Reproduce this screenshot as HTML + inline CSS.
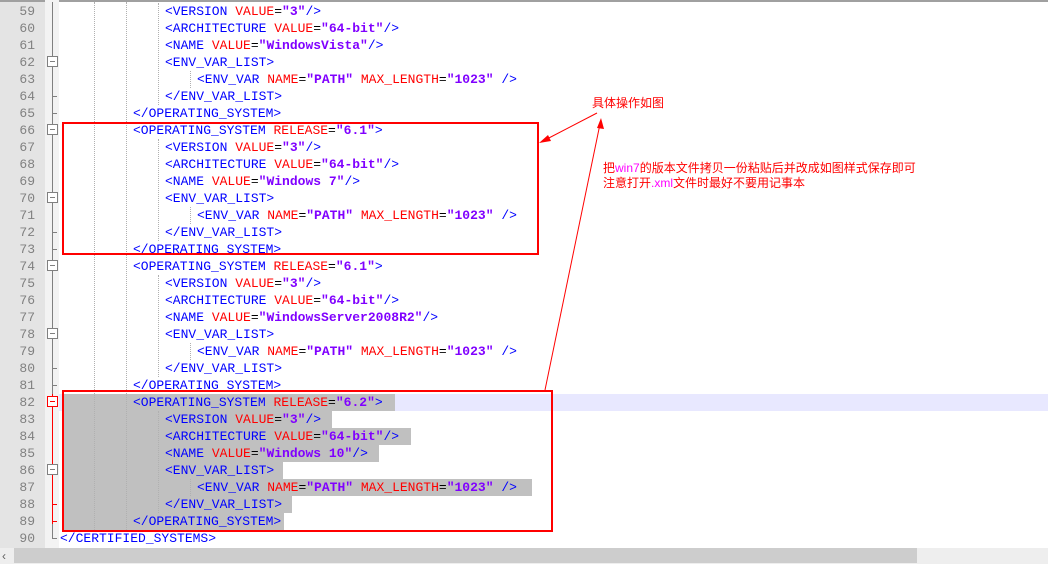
<!DOCTYPE html>
<html><head><meta charset="utf-8"><style>
*{margin:0;padding:0;box-sizing:border-box}
body{width:1048px;height:564px;overflow:hidden;background:#fff;position:relative;font-family:"Liberation Mono",monospace;font-size:13px}
.ln{position:absolute;left:0;width:45px;height:17px;background:#e4e4e4;color:#808080;text-align:right;padding-right:10px;line-height:17px;font-size:13px}
.fm{position:absolute;left:45px;top:0;width:14px;height:548px;background:#f3f3f3}
.fl{position:absolute;left:52px;width:1px;background:#808080}
.fb{position:absolute;left:47px;width:11px;height:11px;border:1px solid #808080;background:#fff}
.fb:after{content:"";position:absolute;left:2px;top:4px;width:5px;height:1px;background:#808080}
.fb.r{border-color:#f00}.fb.r:after{background:#f00}
.tk{position:absolute;left:52px;width:5px;height:1px;background:#808080}
.l{position:absolute;height:17px;line-height:17px;white-space:pre}
.t{color:#0000ff}.a{color:#ff0000}.v{color:#8000ff;font-weight:bold}.e{color:#000}
.sel{position:absolute;left:63px;height:17px;background:#c0c0c0}
.g{position:absolute;width:1px;border-left:1px dotted #b0b0b0}
.box{position:absolute;border:2px solid #f00}
.cn{position:absolute;color:#f00;font-family:"Liberation Sans","Noto Sans CJK SC",sans-serif;font-size:12px;line-height:15px;white-space:nowrap}
</style></head><body>
<div style="position:absolute;left:0;top:0;width:1048px;height:2px;background:#a0a0a0"></div>
<div class="fm"></div>
<div style="position:absolute;left:0;top:2px;width:45px;height:546px;background:#e4e4e4"></div>
<!-- current line highlight -->
<div style="position:absolute;left:59px;top:394px;width:989px;height:17px;background:#e8e8ff"></div>
<!-- selection -->
<div class="sel" style="top:394px;width:332px"></div>
<div class="sel" style="top:411px;width:269px"></div>
<div class="sel" style="top:428px;width:348px"></div>
<div class="sel" style="top:445px;width:316px"></div>
<div class="sel" style="top:462px;width:220px"></div>
<div class="sel" style="top:479px;width:469px"></div>
<div class="sel" style="top:496px;width:229px"></div>
<div class="sel" style="top:513px;width:221px"></div>
<!-- indent guides -->
<div class="g" style="left:94px;top:2px;height:528px"></div>
<div class="g" style="left:126px;top:2px;height:528px"></div>
<div class="g" style="left:158px;top:3px;height:102px"></div>
<div class="g" style="left:158px;top:139px;height:102px"></div>
<div class="g" style="left:158px;top:275px;height:102px"></div>
<div class="g" style="left:158px;top:411px;height:102px"></div>
<div class="g" style="left:190px;top:71px;height:17px"></div>
<div class="g" style="left:190px;top:207px;height:17px"></div>
<div class="g" style="left:190px;top:343px;height:17px"></div>
<div class="g" style="left:190px;top:479px;height:17px"></div>
<!-- line numbers -->
<div class="ln" style="top:3px">59</div><div class="ln" style="top:20px">60</div><div class="ln" style="top:37px">61</div><div class="ln" style="top:54px">62</div><div class="ln" style="top:71px">63</div><div class="ln" style="top:88px">64</div><div class="ln" style="top:105px">65</div><div class="ln" style="top:122px">66</div><div class="ln" style="top:139px">67</div><div class="ln" style="top:156px">68</div><div class="ln" style="top:173px">69</div><div class="ln" style="top:190px">70</div><div class="ln" style="top:207px">71</div><div class="ln" style="top:224px">72</div><div class="ln" style="top:241px">73</div><div class="ln" style="top:258px">74</div><div class="ln" style="top:275px">75</div><div class="ln" style="top:292px">76</div><div class="ln" style="top:309px">77</div><div class="ln" style="top:326px">78</div><div class="ln" style="top:343px">79</div><div class="ln" style="top:360px">80</div><div class="ln" style="top:377px">81</div><div class="ln" style="top:394px">82</div><div class="ln" style="top:411px">83</div><div class="ln" style="top:428px">84</div><div class="ln" style="top:445px">85</div><div class="ln" style="top:462px">86</div><div class="ln" style="top:479px">87</div><div class="ln" style="top:496px">88</div><div class="ln" style="top:513px">89</div><div class="ln" style="top:530px">90</div>
<!-- fold -->
<div class="fl" style="top:2px;height:392px"></div>
<div class="fl" style="top:394px;height:130px;background:#f00"></div>
<div class="fl" style="top:524px;height:14px"></div>
<div class="tk" style="top:96px"></div><div class="tk" style="top:113px"></div><div class="tk" style="top:232px"></div><div class="tk" style="top:249px"></div><div class="tk" style="top:368px"></div><div class="tk" style="top:385px"></div><div class="tk" style="top:504px;background:#f00"></div><div class="tk" style="top:521px;background:#f00"></div><div class="tk" style="top:538px"></div>
<div class="fb" style="top:56px"></div><div class="fb" style="top:124px"></div><div class="fb" style="top:192px"></div><div class="fb" style="top:260px"></div><div class="fb" style="top:328px"></div><div class="fb r" style="top:396px"></div><div class="fb" style="top:464px"></div>
<!-- code -->
<div class="l" style="top:3px;left:165px"><span class="t">&lt;VERSION </span><span class="a">VALUE</span><span class="e">=</span><span class="v">"3"</span><span class="t">/&gt;</span></div>
<div class="l" style="top:20px;left:165px"><span class="t">&lt;ARCHITECTURE </span><span class="a">VALUE</span><span class="e">=</span><span class="v">"64-bit"</span><span class="t">/&gt;</span></div>
<div class="l" style="top:37px;left:165px"><span class="t">&lt;NAME </span><span class="a">VALUE</span><span class="e">=</span><span class="v">"WindowsVista"</span><span class="t">/&gt;</span></div>
<div class="l" style="top:54px;left:165px"><span class="t">&lt;ENV_VAR_LIST&gt;</span></div>
<div class="l" style="top:71px;left:197px"><span class="t">&lt;ENV_VAR </span><span class="a">NAME</span><span class="e">=</span><span class="v">"PATH"</span> <span class="a">MAX_LENGTH</span><span class="e">=</span><span class="v">"1023"</span><span class="t"> /&gt;</span></div>
<div class="l" style="top:88px;left:165px"><span class="t">&lt;/ENV_VAR_LIST&gt;</span></div>
<div class="l" style="top:105px;left:133px"><span class="t">&lt;/OPERATING_SYSTEM&gt;</span></div>
<div class="l" style="top:122px;left:133px"><span class="t">&lt;OPERATING_SYSTEM </span><span class="a">RELEASE</span><span class="e">=</span><span class="v">"6.1"</span><span class="t">&gt;</span></div>
<div class="l" style="top:139px;left:165px"><span class="t">&lt;VERSION </span><span class="a">VALUE</span><span class="e">=</span><span class="v">"3"</span><span class="t">/&gt;</span></div>
<div class="l" style="top:156px;left:165px"><span class="t">&lt;ARCHITECTURE </span><span class="a">VALUE</span><span class="e">=</span><span class="v">"64-bit"</span><span class="t">/&gt;</span></div>
<div class="l" style="top:173px;left:165px"><span class="t">&lt;NAME </span><span class="a">VALUE</span><span class="e">=</span><span class="v">"Windows 7"</span><span class="t">/&gt;</span></div>
<div class="l" style="top:190px;left:165px"><span class="t">&lt;ENV_VAR_LIST&gt;</span></div>
<div class="l" style="top:207px;left:197px"><span class="t">&lt;ENV_VAR </span><span class="a">NAME</span><span class="e">=</span><span class="v">"PATH"</span> <span class="a">MAX_LENGTH</span><span class="e">=</span><span class="v">"1023"</span><span class="t"> /&gt;</span></div>
<div class="l" style="top:224px;left:165px"><span class="t">&lt;/ENV_VAR_LIST&gt;</span></div>
<div class="l" style="top:241px;left:133px"><span class="t">&lt;/OPERATING_SYSTEM&gt;</span></div>
<div class="l" style="top:258px;left:133px"><span class="t">&lt;OPERATING_SYSTEM </span><span class="a">RELEASE</span><span class="e">=</span><span class="v">"6.1"</span><span class="t">&gt;</span></div>
<div class="l" style="top:275px;left:165px"><span class="t">&lt;VERSION </span><span class="a">VALUE</span><span class="e">=</span><span class="v">"3"</span><span class="t">/&gt;</span></div>
<div class="l" style="top:292px;left:165px"><span class="t">&lt;ARCHITECTURE </span><span class="a">VALUE</span><span class="e">=</span><span class="v">"64-bit"</span><span class="t">/&gt;</span></div>
<div class="l" style="top:309px;left:165px"><span class="t">&lt;NAME </span><span class="a">VALUE</span><span class="e">=</span><span class="v">"WindowsServer2008R2"</span><span class="t">/&gt;</span></div>
<div class="l" style="top:326px;left:165px"><span class="t">&lt;ENV_VAR_LIST&gt;</span></div>
<div class="l" style="top:343px;left:197px"><span class="t">&lt;ENV_VAR </span><span class="a">NAME</span><span class="e">=</span><span class="v">"PATH"</span> <span class="a">MAX_LENGTH</span><span class="e">=</span><span class="v">"1023"</span><span class="t"> /&gt;</span></div>
<div class="l" style="top:360px;left:165px"><span class="t">&lt;/ENV_VAR_LIST&gt;</span></div>
<div class="l" style="top:377px;left:133px"><span class="t">&lt;/OPERATING_SYSTEM&gt;</span></div>
<div class="l" style="top:394px;left:133px"><span class="t">&lt;OPERATING_SYSTEM </span><span class="a">RELEASE</span><span class="e">=</span><span class="v">"6.2"</span><span class="t">&gt;</span></div>
<div class="l" style="top:411px;left:165px"><span class="t">&lt;VERSION </span><span class="a">VALUE</span><span class="e">=</span><span class="v">"3"</span><span class="t">/&gt;</span></div>
<div class="l" style="top:428px;left:165px"><span class="t">&lt;ARCHITECTURE </span><span class="a">VALUE</span><span class="e">=</span><span class="v">"64-bit"</span><span class="t">/&gt;</span></div>
<div class="l" style="top:445px;left:165px"><span class="t">&lt;NAME </span><span class="a">VALUE</span><span class="e">=</span><span class="v">"Windows 10"</span><span class="t">/&gt;</span></div>
<div class="l" style="top:462px;left:165px"><span class="t">&lt;ENV_VAR_LIST&gt;</span></div>
<div class="l" style="top:479px;left:197px"><span class="t">&lt;ENV_VAR </span><span class="a">NAME</span><span class="e">=</span><span class="v">"PATH"</span> <span class="a">MAX_LENGTH</span><span class="e">=</span><span class="v">"1023"</span><span class="t"> /&gt;</span></div>
<div class="l" style="top:496px;left:165px"><span class="t">&lt;/ENV_VAR_LIST&gt;</span></div>
<div class="l" style="top:513px;left:133px"><span class="t">&lt;/OPERATING_SYSTEM&gt;</span></div>
<div class="l" style="top:530px;left:60px"><span class="t">&lt;/CERTIFIED_SYSTEMS&gt;</span></div>
<!-- annotations -->
<div class="box" style="left:62px;top:122px;width:477px;height:133px"></div>
<div class="box" style="left:62px;top:390px;width:491px;height:142px"></div>
<svg style="position:absolute;left:0;top:0" width="1048" height="564">
<line x1="597" y1="113" x2="545" y2="140" stroke="#f00" stroke-width="1"/>
<polygon points="539,143 548,135 551,141" fill="#f00"/>
<line x1="545" y1="390" x2="600" y2="124" stroke="#f00" stroke-width="1"/>
<polygon points="601,118 597,128 604,129" fill="#f00"/>
</svg>
<div class="cn" style="left:592px;top:96px;font-size:12px">具体操作如图</div>
<div class="cn" style="left:603px;top:161px">把<span style="color:#f0f">win7</span>的版本文件拷贝一份粘贴后并改成如图样式保存即可</div>
<div class="cn" style="left:603px;top:176px">注意打开<span style="color:#f0f">.xml</span>文件时最好不要用记事本</div>
<!-- scrollbar -->
<div style="position:absolute;left:0;top:548px;width:1048px;height:16px;background:#eeeeee"></div>
<div style="position:absolute;left:14px;top:548px;width:903px;height:15px;background:#cdcdcd"></div>
<div style="position:absolute;left:2px;top:548px;font-size:12px;color:#606060;line-height:16px;font-family:'Liberation Sans',sans-serif">&#8249;</div>
</body></html>
